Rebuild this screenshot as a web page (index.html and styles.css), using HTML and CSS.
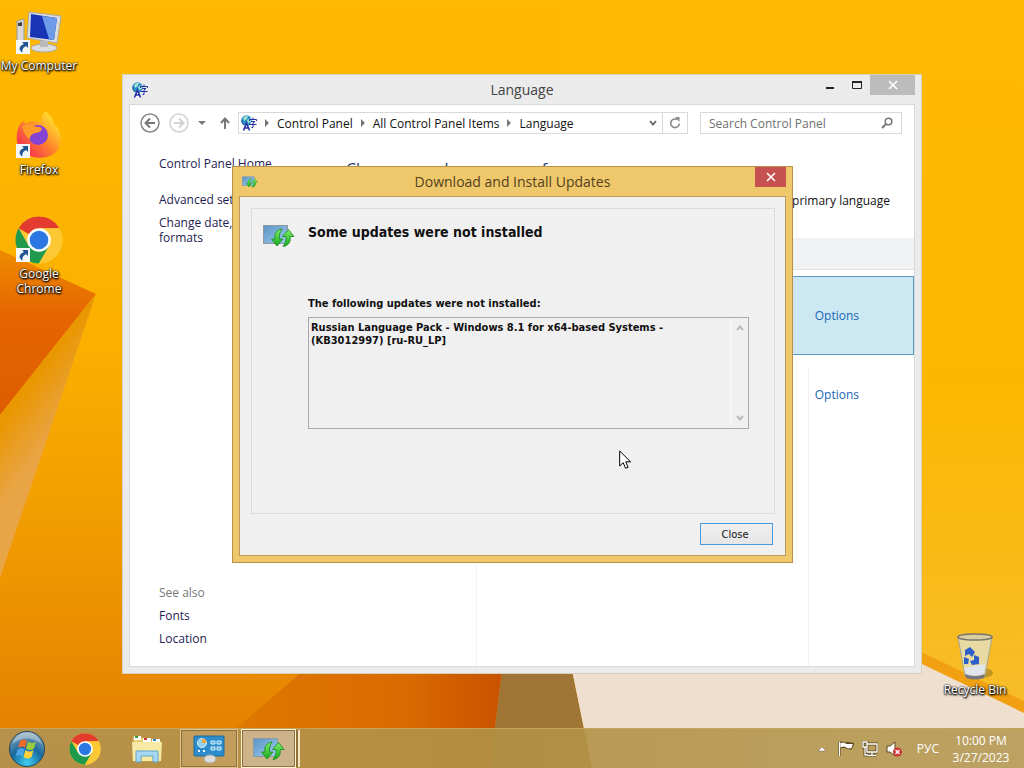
FILE: index.html
```
<!DOCTYPE html>
<html lang="en">
<head>
  <meta charset="UTF-8">
  <meta name="viewport" content="width=device-width, initial-scale=1.0">
  <title>Desktop</title>
  <link rel="stylesheet" href="styles.css">
</head>
<body>
  <!-- shared icons -->
  <svg class="defs" width="0" height="0" aria-hidden="true">
    <defs>
      <linearGradient id="screen" x1="0" y1="0" x2="1" y2="1">
        <stop offset="0" stop-color="#5b93c4"/><stop offset="1" stop-color="#9fcdee"/>
      </linearGradient>
      <linearGradient id="leaf" x1="0" y1="0" x2="0" y2="1">
        <stop offset="0" stop-color="#7df06a"/><stop offset="1" stop-color="#17a81c"/>
      </linearGradient>
      <symbol id="chrome" viewBox="0 0 48 48">
        <circle cx="24" cy="24" r="23.500" fill="#fcc934"/>
        <path d="M24 24 3.600 12.300A23.500 23.500 0 0 1 44.400 12.300H24z" fill="#e33b2e"/>
        <path d="M3.600 12.300A23.500 23.500 0 0 0 24 47.500L34.200 29.900 24 24 13.800 29.900z" fill="#1f9a4c"/>
        <path d="M44.400 12.300A23.500 23.500 0 0 1 24 47.500L34.200 29.900 24 12.300z" fill="#fcc934"/>
        <circle cx="24" cy="24" r="11.800" fill="#fff"/>
        <circle cx="24" cy="24" r="9.300" fill="#2b78e4"/>
      </symbol>
      <symbol id="updates" viewBox="0 0 32 24">
        <rect x=".5" y="1.500" width="24" height="18" fill="url(#screen)" stroke="#8d9aa5"/>
        <path d="M19 5C13 6 11 10 12 15H8.500l5.500 7 6-7h-3.500c-.5-4 .5-7 2.500-10z" fill="url(#leaf)" stroke="#158a1b" stroke-width=".8"/>
        <path d="M20 22.500c6-1 8-5 7-10h4L25.500 5.500l-6 7H23c.5 4-1 7-3 10z" fill="url(#leaf)" stroke="#158a1b" stroke-width=".8"/>
      </symbol>
      <symbol id="lang" viewBox="0 0 16 16">
        <circle cx="5.500" cy="5.500" r="5.200" fill="#2c8fc4"/>
        <path d="M2 3q3-3 5-2L6 4 3 6zM6 5l4-2v4L7 8z" fill="#9be0d0"/>
        <path d="M1 4.500A5.500 5.500 0 0 0 3 10" stroke="#145a94" fill="none"/>
        <path d="M5.500 6.500 9.500 16h-8z" fill="#fff" opacity=".7"/>
        <path d="M2.500 15.500 5.500 8l3 7.500M3.500 13h4" stroke="#2430a8" stroke-width="1.600" fill="none"/>
        <path d="M12 2.500V4M8.500 6V4.500h7V6M10 6.500h4L12 8v4.500h-1.500M8.500 9.500h7" stroke="#2430a8" fill="none"/>
      </symbol>
      <symbol id="shortcut" viewBox="0 0 14 14">
        <path d="M0 0h14v14H0z" fill="#f4f8fb"/>
        <path d="M6 2h6v6l-2-2c-3 2-4 3-3.500 6.500C2 10 3 6 8 4z" fill="#205493"/>
      </symbol>
    </defs>
  </svg>

  <main class="desktop">
    <svg class="wallpaper" viewBox="0 0 1024 768" preserveAspectRatio="none" aria-hidden="true">
      <defs>
        <linearGradient id="sky" x1="0" y1="0" x2="0" y2="1">
          <stop offset="0" stop-color="#ffb900"/><stop offset=".45" stop-color="#fbb000"/>
          <stop offset=".7" stop-color="#f09a00"/><stop offset="1" stop-color="#e37d00"/>
        </linearGradient>
        <linearGradient id="right" x1="0" y1="0" x2="0" y2="1">
          <stop offset="0" stop-color="#ffb900"/><stop offset=".5" stop-color="#fbb800"/><stop offset="1" stop-color="#f7bd32"/>
        </linearGradient>
        <linearGradient id="fold" x1="0" y1="0" x2="0" y2="1">
          <stop offset="0" stop-color="#ee8b00"/><stop offset=".4" stop-color="#e66500"/><stop offset="1" stop-color="#dd5c00"/>
        </linearGradient>
        <linearGradient id="ray" gradientUnits="userSpaceOnUse" x1="10" y1="410" x2="50" y2="440">
          <stop offset="0" stop-color="#e99700"/><stop offset="1" stop-color="#e9a446"/>
        </linearGradient>
        <linearGradient id="base" x1="0" y1="0" x2="1" y2="0">
          <stop offset="0" stop-color="#e07c00"/><stop offset=".7" stop-color="#d96a00"/><stop offset="1" stop-color="#c85200"/>
        </linearGradient>
      </defs>
      <path d="M0 0h1024v768H0z" fill="url(#sky)"/>
      <path d="M560 0h464v768H560z" fill="url(#right)"/>
      <path d="M0 250 96 294 0 415z" fill="url(#fold)"/>
      <path d="M96 294 0 415v163z" fill="url(#ray)"/>
      <path d="M304 670 190 768h300l12-98z" fill="url(#base)"/>
      <path d="M502 670h70l20 98H490z" fill="#a07435"/>
      <path d="M900 642 1024 701v20L900 664z" fill="#f0a011"/>
      <path d="M572 670h350v-6l102 49v55H592z" fill="#efdfce"/>
    </svg>

    <nav class="shortcuts">
      <a class="shortcut" href="#">
        <svg class="shortcut-icon" viewBox="0 0 48 48">
          <path d="M2 13 9 11v25l-7-3z" fill="#d9d9d5" stroke="#999"/><path d="M3 15l4-1v4H3z" fill="#444"/>
          <path d="M14 4 46 8l-4 27-30-5z" fill="#dcdedd" stroke="#aaa"/>
          <path d="M16 6 42 10l-3 22-24-3z" fill="#1735b5"/><path d="M27 8 42 10l-3 22-5-1z" fill="#6d9be8"/>
          <ellipse cx="29" cy="40" rx="13" ry="4" fill="#ddd" stroke="#aaa"/><path d="M25 33h8v6h-8z" fill="#bbb"/>
          <use href="#shortcut" x="1" y="32" width="14" height="14"/>
        </svg>
        <span>My Computer</span>
      </a>
      <a class="shortcut" href="#">
        <svg class="shortcut-icon" viewBox="0 0 48 48">
          <defs><linearGradient id="fire" x1="1" y1="0" x2="0" y2="1"><stop offset=".15" stop-color="#ffe22e"/><stop offset=".5" stop-color="#ff852b"/><stop offset=".9" stop-color="#f32855"/></linearGradient></defs>
          <path d="M30-1c7 5 8 9 9 13 6 5 8 13 6 20C42 51 7 50 2 30 1 21 3 13 8 9l3 3 5-3 10 2q-1-6 4-12z" fill="url(#fire)"/>
          <circle cx="23" cy="23" r="10" fill="#8443d3"/>
          <path d="M7 14q9-4 14 1 5-1 6 2-2 4-7 4-6 2-5 7-6-5-8-14z" fill="#ff9b2b"/>
          <use href="#shortcut" x="1" y="32" width="14" height="14"/>
        </svg>
        <span>Firefox</span>
      </a>
      <a class="shortcut" href="#">
        <svg class="shortcut-icon" viewBox="0 0 48 48">
          <use href="#chrome" width="48" height="48"/>
          <use href="#shortcut" x="1" y="32" width="14" height="14"/>
        </svg>
        <span>Google<br>Chrome</span>
      </a>
    </nav>

    <a class="shortcut recycle" href="#">
      <svg class="shortcut-icon" viewBox="0 0 48 48">
        <ellipse cx="31" cy="41" rx="11" ry="5" fill="#6b5a20" opacity=".4"/>
        <path d="M7 5 41 5 34 44Q24 49 14 44z" fill="#e5dfb8" fill-opacity=".85" stroke="#a5a596"/>
        <path d="M13 36 34 32l-1 10q-9 5-18 1z" fill="#dfe5ea"/>
        <ellipse cx="24" cy="5" rx="17" ry="3" fill="#d9cfa0" stroke="#77766e" stroke-width="1.500"/>
        <path d="M14 18l5-3 5 5-3 5-3-3-4 2zM23 23l5 2v7l-7 1-2-4 4-1zM13 25l5 2-1 5h-4z" fill="#2c60c8"/>
        <path d="M14 42q10 4 20 0l-1 4q-9 3-18 0z" fill="#777"/>
      </svg>
      <span>Recycle Bin</span>
    </a>

    <section class="window">
      <header class="titlebar">
        <svg class="title-icon" viewBox="0 0 16 16"><use href="#lang"/></svg>
        <h1 class="window-title">Language</h1>
        <div class="window-buttons">
          <button class="win-btn" aria-label="Minimize"><svg width="10" height="12"><path d="M1 9h8" stroke="#222" stroke-width="2"/></svg></button>
          <button class="win-btn" aria-label="Maximize"><svg width="12" height="10"><path d="M1.500 2h9v6.500h-9z" fill="none" stroke="#222"/><path d="M1 2h10" stroke="#222" stroke-width="2"/></svg></button>
          <button class="win-btn win-close" aria-label="Close window"><svg width="10" height="10"><path d="M1 1l8 8M9 1 1 9" stroke="#fff" stroke-width="1.600"/></svg></button>
        </div>
      </header>
      <div class="client">
        <div class="toolbar">
          <button class="nav-btn" aria-label="Back"><svg width="20" height="20"><circle cx="10" cy="10" r="9" fill="none" stroke="#888" stroke-width="1.500"/><path d="M15 10H6M10 5.500 5.500 10l4.500 4.500" fill="none" stroke="#777" stroke-width="2"/></svg></button>
          <button class="nav-btn" aria-label="Forward"><svg width="20" height="20"><circle cx="10" cy="10" r="9" fill="none" stroke="#d2d2d2" stroke-width="1.500"/><path d="M5 10h9M10 5.500l4.500 4.500-4.500 4.500" fill="none" stroke="#d2d2d2" stroke-width="2"/></svg></button>
          <button class="nav-btn" aria-label="Recent"><svg width="8" height="6"><path d="M0 1h8L4 5z" fill="#777"/></svg></button>
          <button class="nav-btn" aria-label="Up"><svg width="12" height="14"><path d="M6 13V3M2 7l4-4.500L10 7" fill="none" stroke="#777" stroke-width="2"/></svg></button>
          <div class="address">
            <svg class="title-icon" viewBox="0 0 16 16"><use href="#lang"/></svg>
            <svg class="crumb-arrow" viewBox="0 0 4 8"><path d="M0 0v8l4-4z"/></svg>
            <a href="#">Control Panel</a>
            <svg class="crumb-arrow" viewBox="0 0 4 8"><path d="M0 0v8l4-4z"/></svg>
            <a href="#">All Control Panel Items</a>
            <svg class="crumb-arrow" viewBox="0 0 4 8"><path d="M0 0v8l4-4z"/></svg>
            <a href="#">Language</a>
            <button class="addr-btn addr-drop" aria-label="Previous locations"><svg width="8" height="6"><path d="M1 1l3 3.500L7 1" fill="none" stroke="#666" stroke-width="1.800"/></svg></button>
            <button class="addr-btn addr-refresh" aria-label="Refresh"><svg width="12" height="12"><path d="M8 2.500A4.300 4.300 0 1 0 10.300 6.500" fill="none" stroke="#888" stroke-width="1.600"/><path d="M6 0h4.500v5z" fill="#888"/></svg></button>
          </div>
          <label class="search">
            <input type="text" placeholder="Search Control Panel" aria-label="Search Control Panel">
            <svg width="12" height="12"><circle cx="7.500" cy="4.500" r="3.300" fill="none" stroke="#777" stroke-width="1.600"/><path d="M5 7 1 11" stroke="#777" stroke-width="2"/></svg>
          </label>
        </div>
        <div class="columns">
          <aside class="sidebar">
            <a class="home" href="#">Control Panel Home</a>
            <a href="#">Advanced settings</a>
            <a href="#">Change date, time, or number<br>formats</a>
            <div class="see-also">
              <span>See also</span>
              <a href="#">Fonts</a>
              <a href="#">Location</a>
            </div>
          </aside>
          <div class="content">
            <h2>Change your language preferences</h2>
            <p>Add languages you want to use to this list. The language at the top of your list is your primary language</p>
            <div class="commands"></div>
            <ul class="languages">
              <li class="selected"><a href="#">Options</a></li>
              <li><a href="#">Options</a></li>
            </ul>
            <div class="guides"></div>
          </div>
        </div>
      </div>
    </section>

    <section class="dialog" role="dialog" aria-labelledby="dialogTitle">
      <header class="dialog-titlebar">
        <svg class="title-icon" viewBox="0 0 32 24"><use href="#updates"/></svg>
        <h1 class="window-title" id="dialogTitle">Download and Install Updates</h1>
        <button class="dialog-close" aria-label="Close dialog"><svg width="10" height="10"><path d="M1 1l8 8M9 1 1 9" stroke="#fff" stroke-width="1.600"/></svg></button>
      </header>
      <div class="dialog-body">
        <div class="panel">
          <div class="panel-head">
            <svg width="32" height="24"><use href="#updates"/></svg>
            <h2>Some updates were not installed</h2>
          </div>
          <div class="failed">
            <label for="failedList">The following updates were not installed:</label>
            <div class="list-box">
              <textarea id="failedList" readonly>Russian Language Pack - Windows 8.1 for x64-based Systems - (KB3012997) [ru-RU_LP]</textarea>
              <div class="scroll">
                <svg width="8" height="6"><path d="M1 5l3-3.500L7 5" fill="none" stroke="#bbb" stroke-width="2"/></svg>
                <svg width="8" height="6"><path d="M1 1l3 3.500L7 1" fill="none" stroke="#bbb" stroke-width="2"/></svg>
              </div>
            </div>
          </div>
        </div>
        <div class="dialog-actions"><button class="close-btn">Close</button></div>
      </div>
    </section>

    <svg class="cursor" width="13" height="20" viewBox="0 0 13 20"><path d="M.7 1v15l3.500-3.300 2.400 5.600 2.500-1-2.400-5.500h4.900z" fill="#fff" stroke="#000"/></svg>
  </main>

  <footer class="taskbar">
    <button class="task start" aria-label="Start">
      <svg width="38" height="38" viewBox="0 0 38 38">
        <defs><radialGradient id="orb" cx=".5" cy=".9" r=".9"><stop offset="0" stop-color="#3fd0f3"/><stop offset=".5" stop-color="#176a9f"/><stop offset="1" stop-color="#8fa8b8"/></radialGradient></defs>
        <circle cx="19" cy="19" r="17.500" fill="url(#orb)" stroke="#24435c"/>
        <path d="M12 11q4-3 7 0l-2 7q-3-3-7 0z" fill="#ee6b2d"/><path d="M20 11.500q4 3 8 0l-2 7q-4 3-8 0z" fill="#9ccb3b"/>
        <path d="M9.500 19.500q4-3 7 0l-2 7q-3-3-7 0z" fill="#4aa5e4"/><path d="M17.500 20q4 3 8 0l-2 7q-4 3-8 0z" fill="#ffd23b"/>
        <path d="M4 14Q19 3 34 14 29 2 19 2T4 14z" fill="#fff" opacity=".35"/>
      </svg>
    </button>
    <button class="task" aria-label="Chrome"><svg width="32" height="32"><use href="#chrome"/></svg></button>
    <button class="task" aria-label="Explorer">
      <svg width="32" height="32" viewBox="0 0 32 32">
        <path d="M2 4h9l2 3h16v21H2z" fill="#e8cf74" stroke="#c6a94e"/><path d="M3 3h7v4H3zM12 5h8v4h-8zM21 6h8v4h-8z" fill="#fff"/>
        <path d="M4 3h3v2H4z" fill="#3a9a3a"/><path d="M13 5h3v2h-3z" fill="#d33"/><path d="M22 6h3v2h-3z" fill="#38c"/>
        <path d="M1 9h30l-1 19H2z" fill="#f8e9a4"/><path d="M5 29V18h22v11h-5v-6H10v6z" fill="#a9d9f2" stroke="#5fa3cc"/>
      </svg>
    </button>
    <button class="task open" aria-label="Language">
      <svg width="32" height="30" viewBox="0 0 32 30">
        <rect x="1" y="2" width="30" height="20" rx="1" fill="#2d8ccb" stroke="#1c6ca4"/>
        <circle cx="9" cy="9" r="4.500" fill="#8fd0f0" stroke="#d7effa"/><path d="M9 9V4.500A4.500 4.500 0 0 1 13.500 9z" fill="#f3a63b"/>
        <path d="M18 7h4v3h-4zM24 7h4v3h-4zM18 13h4v3h-4zM24 13h4v3h-4z" fill="#59b5e6" stroke="#d7effa"/><path d="M5 17h2M10 17h2" stroke="#fff" stroke-width="2"/>
        <ellipse cx="17" cy="25" rx="6" ry="4" fill="#dcdcd8" stroke="#aaa"/>
      </svg>
    </button>
    <button class="task open active" aria-label="Download and Install Updates"><svg width="32" height="24"><use href="#updates"/></svg></button>
    <div class="tray">
      <button aria-label="Show hidden icons"><svg width="8" height="6"><path d="M0 5h8L4 1z" fill="#fff" stroke="#765" stroke-width=".5"/></svg></button>
      <svg width="16" height="16" viewBox="0 0 16 16"><path d="M1.500 1v14M2 2q3-1 6 1h1v-1l6 1-2 4q-3 1-5-1-3-1-6 0z" fill="#fff" stroke="#5b4a20" stroke-width="2.400" stroke-linejoin="round"/><path d="M1.500 1v14M3 2.500q3-1 5 1h6l-1 3q-3 1-5-1-3-1-5 0z" fill="#fff" stroke="#fff" stroke-width="1.200"/></svg>
      <svg width="16" height="16" viewBox="0 0 16 16"><path d="M5 3h10v8H5zM10 11v3M6 14.500h8M1 1h4v5H1zM3 6v8h3" fill="none" stroke="#5b4a20" stroke-width="3"/><path d="M5 3h10v8H5zM10 11v3M6 14.500h8M1 1h4v5H1zM3 6v8h3" fill="none" stroke="#fff" stroke-width="1.300"/></svg>
      <svg width="16" height="16" viewBox="0 0 16 16"><path d="M1 5h3l5-4v14l-5-4H1z" fill="#fff" stroke="#5b4a20"/><circle cx="11.500" cy="11" r="4.500" fill="#d03434"/><path d="M9.500 9l4 4m0-4-4 4" stroke="#fff" stroke-width="1.400"/></svg>
      <button class="input-lang">РУС</button>
      <time class="clock">10:00 PM<br>3/27/2023</time>
    </div>
  </footer>
</body>
</html>
```
FILE: styles.css
```
* {
  box-sizing: border-box;
}
body {
  margin: 0;
  height: 100vh;
  display: flex;
  flex-direction: column;
  overflow: hidden;
  background: #f0a000;
  font-family: "Open Sans", "Noto Sans", sans-serif;
  font-size: 12px;
  line-height: 15px;
  color: #111;
}
a {
  color: inherit;
  text-decoration: none;
}
button {
  font: inherit;
  color: inherit;
  border: none;
  background: none;
  padding: 0;
  display: flex;
  align-items: center;
  justify-content: center;
}
h1, h2, p, ul {
  margin: 0;
  padding: 0;
  font-weight: normal;
}
svg {
  flex: none;
}
.defs {
  position: absolute;
}
.desktop {
  flex: 1;
}
.wallpaper {
  position: absolute;
  inset: 0;
  width: 100%;
  height: 100%;
}

/* desktop icons */
.shortcuts {
  position: absolute;
  left: 0;
  top: 8px;
}
.shortcut {
  display: flex;
  flex-direction: column;
  align-items: center;
  gap: 2px;
  width: 78px;
  height: 104px;
  text-align: center;
  white-space: nowrap;
  color: #fff;
  text-shadow: 1px 1px 2px #000, 0 1px 2px #000, 0 0 2px #000;
}
.shortcut-icon {
  width: 48px;
  height: 48px;
}
.recycle {
  position: absolute;
  right: 10px;
  top: 632px;
}

/* language window */
.window {
  position: absolute;
  left: 122px;
  top: 74px;
  width: 800px;
  height: 600px;
  display: flex;
  flex-direction: column;
  padding: 0 6px 6px;
  background: #ebebeb;
  border: 1px solid #d6d0bd;
}
.titlebar, .dialog-titlebar {
  display: flex;
  align-items: center;
  height: 29px;
  position: relative;
}
.title-icon {
  width: 16px;
  height: 16px;
}
.titlebar .title-icon, .dialog-titlebar .title-icon {
  margin-left: 3px;
}
.window-title {
  position: absolute;
  inset: 0;
  text-align: center;
  font-size: 14px;
  line-height: 30px;
  color: #444;
}
.window-buttons {
  display: flex;
  margin-left: auto;
  align-self: flex-start;
  z-index: 1;
}
.win-btn {
  width: 27px;
  height: 20px;
}
.win-close {
  width: 45px;
  background: #bcbcbc;
}
.client {
  flex: 1;
  display: flex;
  flex-direction: column;
  background: #fff;
  border: 1px solid #d5dadd;
}
.toolbar {
  display: flex;
  align-items: center;
  padding: 6px 12px 0 10px;
  height: 30px;
}
.nav-btn {
  margin-right: 9px;
}
.nav-btn:nth-child(3) {
  margin-right: 13px;
}
.nav-btn:nth-child(4) {
  margin-right: 7px;
}
.address, .search {
  display: flex;
  align-items: center;
  height: 22px;
  border: 1px solid #d9d9d9;
}
.address {
  flex: 1;
  padding-left: 2px;
}
.crumb-arrow {
  width: 4px;
  height: 8px;
  margin: 0 8px;
  fill: #777;
}
.addr-btn {
  width: 18px;
  height: 20px;
}
.addr-drop {
  margin-left: auto;
}
.addr-refresh {
  width: 25px;
  border-left: 1px solid #d9d9d9;
}
.search {
  width: 202px;
  margin-left: 12px;
  padding: 0 8px;
}
.search input {
  flex: 1;
  min-width: 0;
  border: none;
  outline: none;
  padding: 0;
  font: inherit;
}
.search input::placeholder {
  color: #707070;
}
.columns {
  flex: 1;
  display: flex;
}
.sidebar {
  width: 216px;
  padding: 21px 0 20px 29px;
  display: flex;
  flex-direction: column;
  gap: 8px;
  white-space: nowrap;
  color: #1d1d52;
}
.sidebar .home {
  margin-bottom: 13px;
}
.see-also {
  margin-top: auto;
  display: flex;
  flex-direction: column;
  gap: 8px;
}
.see-also span {
  color: #777;
}
.content {
  flex: 1;
  min-width: 0;
  display: flex;
  flex-direction: column;
}
.content h2 {
  padding-top: 24px;
  font-size: 16px;
  line-height: 20px;
  color: #1f3864;
}
.content p {
  display: flex;
  justify-content: flex-end;
  white-space: nowrap;
  padding: 14px 24px 0 0;
}
.commands {
  height: 32px;
  margin: 30px 0 6px;
  background: #f1f2f3;
  border-bottom: 1px solid #e3e3e3;
}
.languages {
  list-style: none;
}
.languages li {
  display: flex;
  align-items: center;
  justify-content: flex-end;
  height: 79px;
  padding-right: 54px;
  color: #1a66b5;
  border: 1px solid transparent;
}
.languages .selected {
  background: #cbe8f3;
  border-color: #5a9cc0;
}
.guides {
  flex: 1;
  margin: -66px 105px 0 130px;
  border: solid #f1f1f1;
  border-width: 0 1px;
  pointer-events: none;
}

/* updates dialog */
.dialog {
  position: absolute;
  left: 232px;
  top: 166px;
  width: 561px;
  height: 397px;
  display: flex;
  flex-direction: column;
  padding: 0 6px 6px;
  background: #efc86b;
  border: 1px solid #b9914a;
}
.dialog-titlebar .window-title {
  color: #54401c;
}
.dialog-close {
  width: 31px;
  height: 20px;
  margin-left: auto;
  align-self: flex-start;
  background: #c75050;
  z-index: 1;
}
.dialog-body {
  flex: 1;
  display: flex;
  flex-direction: column;
  padding: 11px 10px 10px 11px;
  background: #f0f0f0;
  border: 1px solid #b99a5c;
  font-family: "DejaVu Sans Condensed", "DejaVu Sans", sans-serif;
  font-size: 11px;
}
.panel {
  flex: 1;
  padding: 12px 25px 0 11px;
  border: 1px solid #dcdcdc;
}
.panel-head {
  display: flex;
  gap: 13px;
}
.panel-head svg {
  margin-top: 3px;
}
.panel-head h2 {
  font-size: 14px;
  line-height: 22px;
  font-weight: bold;
}
.failed {
  margin: 48px 0 0 45px;
  font-weight: bold;
}
.failed label {
  display: block;
  margin-bottom: 6px;
}
.list-box {
  display: flex;
  height: 112px;
  border: 1px solid #aaa;
}
.list-box textarea {
  flex: 1;
  resize: none;
  border: none;
  outline: none;
  background: none;
  padding: 3px 2px;
  font: inherit;
  line-height: 13px;
  color: #111;
  overflow: hidden;
}
.scroll {
  display: flex;
  flex-direction: column;
  justify-content: space-between;
  align-items: center;
  width: 18px;
  padding: 7px 0;
  border-left: 1px solid #fafafa;
}
.dialog-actions {
  display: flex;
  justify-content: flex-end;
  padding: 9px 2px 0;
}
.close-btn {
  width: 73px;
  height: 22px;
  padding-right: 3px;
  border: 1px solid #4a98dc;
  background: linear-gradient(#f0f0f0, #e6e6e6);
}
.cursor {
  position: absolute;
  left: 619px;
  top: 450px;
}

/* taskbar */
.taskbar {
  position: relative;
  display: flex;
  height: 40px;
  border-top: 1px solid #c7a45c;
  background: linear-gradient(to right, rgba(178, 147, 82, 0.9), rgba(178, 146, 69, 0.9) 50%, rgba(182, 155, 87, 0.9));
}
.task {
  width: 58px;
  margin-right: 4px;
}
.task.start {
  width: 54px;
  margin-right: 2px;
}
.task.open {
  margin-right: 3px;
  border: 1px solid #e0c391;
  outline: 1px solid #8e7138;
  outline-offset: -2px;
  background: rgba(205, 170, 115, 0.5);
}
.task.active {
  width: 55px;
  background: #cdb389;
  border-color: #fff3d8;
  box-shadow: 3px 0 0 -1px #8e7138, 5px 0 0 -1px #f5e4bd;
}
.tray {
  margin-left: auto;
  display: flex;
  align-items: center;
  gap: 8px;
  color: #fff;
}
.tray button:first-child {
  margin-right: 4px;
}
.input-lang {
  margin: 0 3px 0 7px;
}
.clock {
  width: 62px;
  margin-right: 12px;
  line-height: 17px;
  text-align: center;
}
```
